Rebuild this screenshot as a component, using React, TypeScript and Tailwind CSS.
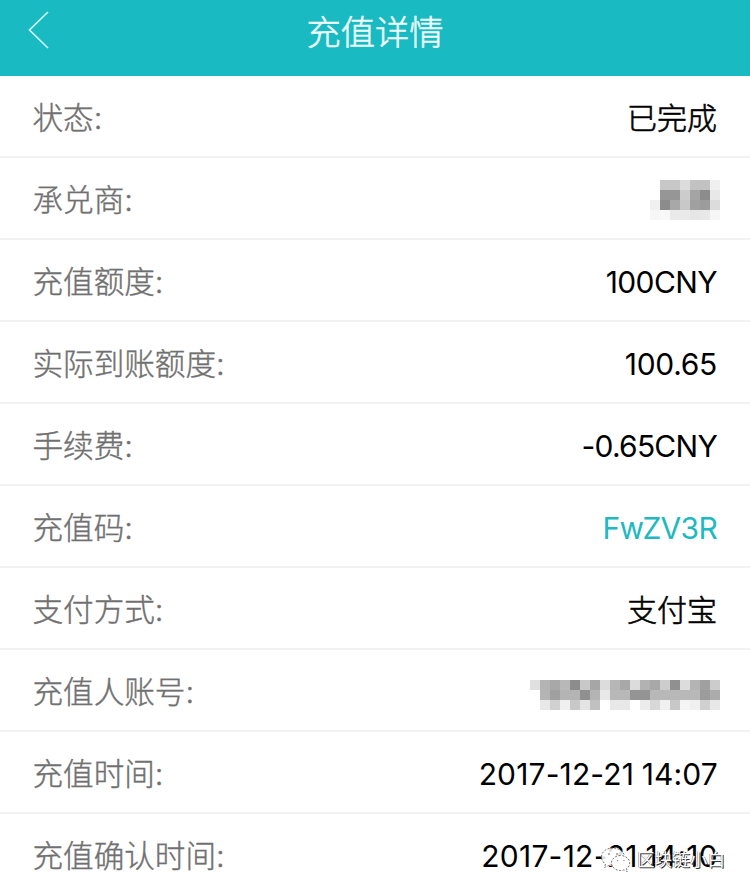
import React from "react";

function Mosaic({ rows, label, className }: { rows: string[]; label: string; className: string }) {
  return (
    <svg
      role="img"
      aria-label={label}
      width={rows[0].length / 2 * 10}
      height={rows.length * 10}
      shapeRendering="crispEdges"
      className={`block shrink-0 ${className}`}
    >
      {rows.flatMap((row, y) =>
        (row.match(/../g) ?? []).map((v, x) => (
          <rect key={`${x}-${y}`} x={x * 10} y={y * 10} width="10" height="10" fill={`#${v}${v}${v}`} />
        )),
      )}
    </svg>
  );
}

// Two hex digits of grey per 10px cell.
const MERCHANT = [
  "ffc8c8dcc2c2f0",
  "ff9696cca48ce8",
  "f08ca8c8a09cdc",
  "f6f8eaeae6e8f6",
];

const ACCOUNT = [
  "e0b4a8b88cc8a6dcb6a8dcb2a8cc90dcb4a0cc",
  "ffb4a0b4b490b4e8b8b89494b8b8b8b8b89cac",
  "ffe8d0f0c8e4c0ffe8e8ffecd8f0c8f4f0d0e8",
];

type Row = { label: string; value: React.ReactNode; tone?: string };

const rows: Row[] = [
  { label: "状态:", value: "已完成", tone: "text-black font-light [-webkit-text-stroke:0.6px_#000]" },
  { label: "承兑商:", value: <Mosaic rows={MERCHANT} label="承兑商" className="-mr-[3px]" /> },
  { label: "充值额度:", value: "100CNY", tone: "text-black tracking-[-0.600px]" },
  { label: "实际到账额度:", value: "100.65", tone: "text-black tracking-[-0.300px]" },
  { label: "手续费:", value: "-0.65CNY", tone: "text-black tracking-[-0.750px]" },
  { label: "充值码:", value: "FwZV3R", tone: "text-[#20b9bf] tracking-[-0.700px]" },
  { label: "支付方式:", value: "支付宝", tone: "text-black font-light [-webkit-text-stroke:0.6px_#000]" },
  { label: "充值人账号:", value: <Mosaic rows={ACCOUNT} label="账号" className="-mr-[3px] mt-[6px]" /> },
  { label: "充值时间:", value: "2017-12-21 14:07", tone: "text-black -mr-[1px] tracking-[0.150px] [word-spacing:-1px]" },
  { label: "充值确认时间:", value: "2017-12-21 14:10", tone: "text-black -mr-[1px] tracking-[0.250px] [word-spacing:-1px]" },
];

function Watermark() {
  return (
    <div className="absolute left-[600px] top-[847px] flex h-[26px] items-center">
      <svg width="32" height="26" viewBox="0 0 32 26" className="shrink-0" stroke="#555" strokeWidth="0.8" strokeDasharray="2 1.5">
        <path d="M13 1C6 1 1.500 5 1.500 10c0 3 1.500 5.500 4 7L4.500 20.500l4-2c1.500.5 3 .7 4.500.7 6.500 0 11.500-4 11.500-9S19.500 1 13 1z" fill="#fff" fillOpacity="0.85" />
        <path d="M20.500 8.500c-5 0-9 3.300-9 7.500s4 7.500 9 7.500c1.200 0 2.400-.2 3.500-.6l3.500 1.700-1-3c2-1.300 3.200-3.300 3.200-5.600 0-4.200-4.200-7.500-9.200-7.500z" fill="#fff" />
        <g fill="#888" stroke="none">
          <circle cx="9" cy="7" r="0.9" />
          <circle cx="17" cy="7" r="0.9" />
          <circle cx="17.500" cy="13.500" r="0.7" />
          <circle cx="24" cy="13.500" r="0.7" />
        </g>
      </svg>
      <span className="ml-[5px] whitespace-nowrap text-[17.600px] leading-[26px] text-white [text-shadow:1px_1px_0_#333,-0.5px_-0.5px_0_#777]">
        区块链小白
      </span>
    </div>
  );
}

export default function App() {
  return (
    <div className="relative h-[893px] w-[750px] overflow-hidden bg-white font-['Inter','Noto_Sans_CJK_SC',sans-serif]">
      <header className="relative flex h-[76px] items-start justify-center bg-[#1abac2]">
        <svg className="absolute left-[28px] top-[11px]" width="21" height="38" viewBox="0 0 21 38" fill="none" stroke="#d5fbfc" strokeWidth="1.600">
          <path d="M20 1L1.500 19 20 37" />
        </svg>
        <h1 className="mt-[8px] text-[34.300px] font-light leading-[50px] text-[#f0ffff] [-webkit-text-stroke:0.5px_#f0ffff]">充值详情</h1>
      </header>
      <main>
        {rows.map((r) => (
          <div key={r.label} className="flex h-[82px] items-center justify-between border-b-2 border-[#f3f3f3] pl-[32.500px] pr-[33px] pt-[4px]">
            <span className="text-[30.600px] font-light leading-[44px] text-[#707070] [-webkit-text-stroke:0.4px_#707070]">{r.label}</span>
            <span className={`text-[30px] leading-[44px] ${r.tone ?? "text-black"}`}>{r.value}</span>
          </div>
        ))}
      </main>
      <Watermark />
    </div>
  );
}
